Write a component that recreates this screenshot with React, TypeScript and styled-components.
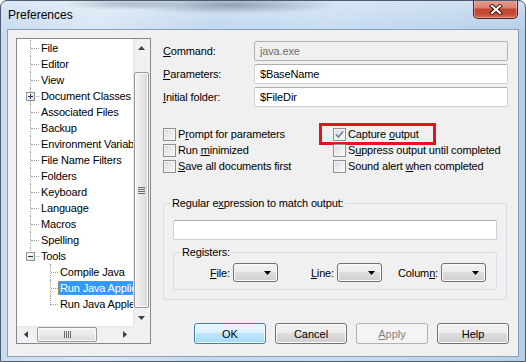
import React from "react";
import styled, { createGlobalStyle, css } from "styled-components";

const GlobalStyle = createGlobalStyle`
  html, body { margin: 0; padding: 0; background: #ffffff; }
  body { font-family: "Liberation Sans", Arial, sans-serif; font-size: 11px; color: #000; }
  * { box-sizing: border-box; }
`;

const FONT = `"Liberation Sans", Arial, sans-serif`;

const Window = styled.div`
  width: 526px;
  height: 362px;
  display: flex;
  flex-direction: column;
  border: 1px solid #4a5b72;
  border-radius: 7px 7px 0 0;
  overflow: hidden;
  background:
    radial-gradient(ellipse 110px 9px at 230px 4px, rgba(70, 82, 100, 0.45), rgba(70, 82, 100, 0)),
    radial-gradient(ellipse 60px 6px at 120px 3px, rgba(70, 82, 100, 0.3), rgba(70, 82, 100, 0)),
    linear-gradient(180deg, rgba(255, 255, 255, 0.3) 0, rgba(255, 255, 255, 0) 28px),
    linear-gradient(90deg, #c9dcf0 0%, #dae7f5 18%, #c2d8ee 40%, #c9ddf2 62%, #b7d0ea 100%);
`;

const TitleBar = styled.div`
  height: 28px;
  display: flex;
  justify-content: space-between;
  flex-shrink: 0;
`;

const Title = styled.div`
  align-self: center;
  padding-left: 7px;
  font-family: ${FONT};
  font-size: 12px;
  color: #000;
`;

const CloseButton = styled.div`
  width: 45px;
  height: 19px;
  margin: -1px 7px 0 0;
  border: 1px solid #5a1f17;
  border-top: none;
  border-radius: 0 0 5px 5px;
  background: linear-gradient(180deg, #e6a596 0%, #d98172 42%, #c54431 52%, #c54b37 78%, #d66e5a 100%);
  box-shadow: inset 0 0 0 1px rgba(255, 255, 255, 0.35);
  display: flex;
  align-items: center;
  justify-content: center;
`;

const Client = styled.div`
  flex: 1;
  margin: 0 6px 4px 6px;
  background: #f0f0f0;
  border: 1px solid #8c9fb8;
  display: flex;
  padding: 8px 0 0 8px;
  letter-spacing: -0.15px;
`;

/* ---------- tree ---------- */

const Tree = styled.div`
  width: 135px;
  height: 306px;
  border: 1px solid #828790;
  background: #fff;
  display: grid;
  grid-template-columns: 116px 17px;
  grid-template-rows: 287px 17px;
  flex-shrink: 0;
`;

const TreeRows = styled.div`
  padding-top: 1px;
  overflow: hidden;
`;

const TreeRow = styled.div<{ level: number; last?: boolean }>`
  position: relative;
  height: 16px;
  display: flex;
  align-items: center;
  white-space: nowrap;
  padding-left: ${({ level }) => (level === 1 ? 22 : 41)}px;

  &::before {
    content: "";
    position: absolute;
    left: ${({ level }) => (level === 1 ? 13 : 33)}px;
    top: 0;
    height: ${({ last }) => (last ? 9 : 16)}px;
    border-left: 1px dotted #a0a0a0;
  }

  &::after {
    content: "";
    position: absolute;
    left: ${({ level }) => (level === 1 ? 14 : 34)}px;
    top: 8px;
    width: ${({ level }) => (level === 1 ? 8 : 7)}px;
    border-top: 1px dotted #a0a0a0;
  }
`;

const TreeLabel = styled.span<{ selected?: boolean }>`
  padding: 0 2px;
  line-height: 14px;
  font-family: ${FONT};
  font-size: 11px;
  color: #000;
  ${({ selected }) =>
    selected &&
    css`
      background: #3399ff;
      color: #fff;
      outline: 1px dotted #c98a3a;
      outline-offset: -1px;
    `}
`;

const Expander = styled.svg`
  position: absolute;
  left: 9px;
  top: 4px;
  z-index: 1;
`;

const VScroll = styled.div`
  display: flex;
  flex-direction: column;
  background: linear-gradient(90deg, #e3e3e3 0, #efefef 2px, #f2f2f2 100%);
`;

const HScroll = styled.div`
  display: flex;
  background: linear-gradient(180deg, #e3e3e3 0, #efefef 2px, #f2f2f2 100%);
`;

const ScrollCorner = styled.div`
  background: #f0f0f0;
`;

const ArrowCell = styled.div`
  width: 17px;
  height: 17px;
  flex-shrink: 0;
  display: flex;
  align-items: center;
  justify-content: center;
`;

const Thumb = styled.div<{ horizontal?: boolean }>`
  border: 1px solid #979797;
  border-radius: 2px;
  box-shadow: inset 0 0 0 1px #fafafa;
  display: flex;
  align-items: center;
  justify-content: center;
  ${({ horizontal }) =>
    horizontal
      ? css`
          width: 60px;
          margin: 1px 0 1px 3px;
          background: linear-gradient(180deg, #f3f3f3 0%, #e8e8e8 50%, #d8d8d8 100%);
        `
      : css`
          height: 236px;
          margin: 16px 1px 0 1px;
          background: linear-gradient(90deg, #f3f3f3 0%, #e8e8e8 50%, #d8d8d8 100%);
        `}
`;

const Spacer = styled.div`
  flex: 1;
`;

/* ---------- right side ---------- */

const Panel = styled.div`
  width: 346px;
  margin-left: 12px;
  display: flex;
  flex-direction: column;
`;

const Form = styled.div`
  margin-top: 3px;
  display: grid;
  grid-template-columns: 91px 254px;
  row-gap: 3px;
  align-items: center;
`;

const Label = styled.label`
  font-family: ${FONT};
  font-size: 11px;
  color: #000;
  white-space: nowrap;
`;

const TextField = styled.input`
  height: 20px;
  width: 100%;
  margin: 0;
  padding: 0 5px;
  font-family: ${FONT};
  font-size: 11px;
  letter-spacing: -0.15px;
  color: #000;
  background: #fff;
  border: 1px solid #cdd0d6;
  border-top-color: #abadb3;
  border-radius: 2px;
  outline: none;

  &:disabled {
    background: #f0f0f0;
    color: #6d6d6d;
    border-color: #adb2b5;
  }
`;

const Checks = styled.div`
  margin-top: 19px;
  display: grid;
  grid-template-columns: 170px 1fr;
  grid-auto-rows: 16px;
`;

const CheckItem = styled.div<{ highlighted?: boolean }>`
  position: relative;
  justify-self: start;
  display: flex;
  align-items: center;
  gap: 2px;
  font-family: ${FONT};
  font-size: 11px;
  white-space: nowrap;

  ${({ highlighted }) =>
    highlighted &&
    css`
      &::after {
        content: "";
        position: absolute;
        left: -14px;
        right: -17px;
        top: -3px;
        bottom: -3px;
        border: 3px solid #e3141d;
      }
    `}
`;

const CheckBox = styled.span`
  width: 13px;
  height: 13px;
  flex-shrink: 0;
  border: 1px solid #8e8f8f;
  background: linear-gradient(135deg, #d3d6da 0%, #eceef0 55%, #fafafa 100%);
  box-shadow: inset 0 0 0 1px #f6f6f6;
  display: flex;
  align-items: center;
  justify-content: center;
`;

const Group = styled.fieldset<{ inner?: boolean }>`
  margin: ${({ inner }) => (inner ? "6px 0 0 0" : "23px 0 0 0")};
  padding: ${({ inner }) => (inner ? "4px 11px 7px 0" : "10px 9px 9px 9px")};
  border: 1px solid #d5dfe5;
  border-radius: 3px;
  min-width: 0;
  width: ${({ inner }) => (inner ? "100%" : "344px")};
`;

const Legend = styled.legend<{ inner?: boolean }>`
  padding: 0 2px;
  margin-left: ${({ inner }) => (inner ? "6px" : "-3px")};
  line-height: 13px;
  font-family: ${FONT};
  font-size: 11px;
`;

const Registers = styled.div`
  display: grid;
  grid-template-columns: repeat(3, 104px);
`;

const RegisterCell = styled.div`
  display: flex;
  align-items: center;
  justify-content: flex-end;
  gap: 3px;
`;

const Combo = styled.div`
  width: 45px;
  height: 19px;
  border: 1px solid #707070;
  border-radius: 3px;
  background: linear-gradient(180deg, #f2f2f2 0%, #ebebeb 49%, #dddddd 50%, #cfcfcf 100%);
  box-shadow: inset 0 0 0 1px #fbfbfb;
  display: flex;
  align-items: center;
  justify-content: flex-end;
  padding-right: 6px;
`;

const Buttons = styled.div`
  margin-top: 23px;
  display: flex;
  justify-content: flex-end;
  gap: 9px;
`;

const Button = styled.button<{ kind?: "default" | "disabled" }>`
  width: 72px;
  height: 21px;
  padding: 0;
  font-family: ${FONT};
  font-size: 11px;
  color: #000;
  border: 1px solid #707070;
  border-radius: 3px;
  background: linear-gradient(180deg, #f2f2f2 0%, #ebebeb 49%, #dddddd 50%, #cfcfcf 100%);
  box-shadow: inset 0 0 0 1px #fcfcfc;

  ${({ kind }) =>
    kind === "default" &&
    css`
      border-color: #3c7fb1;
      background: linear-gradient(180deg, #eaf6fd 0%, #d9f0fc 49%, #bee6fd 50%, #a7d9f5 100%);
      box-shadow: inset 0 0 0 1px #f4fbff;
    `}

  ${({ kind }) =>
    kind === "disabled" &&
    css`
      border-color: #adb2b5;
      background: #f4f4f4;
      color: #838383;
      box-shadow: none;
    `}
`;

/* ---------- small drawings ---------- */

const Arrow = ({ dir }: { dir: "up" | "down" | "left" | "right" }) => {
  const pts = {
    up: "0,4 7,4 3.5,0",
    down: "0,0 7,0 3.5,4",
    left: "4,0 4,7 0,3.5",
    right: "0,0 0,7 4,3.5",
  }[dir];
  const vertical = dir === "up" || dir === "down";
  return (
    <svg width={vertical ? 7 : 4} height={vertical ? 4 : 7}>
      <polygon points={pts} fill="#404040" />
    </svg>
  );
};

const Grip = ({ horizontal }: { horizontal?: boolean }) =>
  horizontal ? (
    <svg width="7" height="7">
      {[0, 2, 4, 6].map((x) => (
        <line key={x} x1={x + 0.5} y1="0" x2={x + 0.5} y2="7" stroke="#6a6a6a" />
      ))}
    </svg>
  ) : (
    <svg width="7" height="7">
      {[0, 2, 4, 6].map((y) => (
        <line key={y} x1="0" y1={y + 0.5} x2="7" y2={y + 0.5} stroke="#6a6a6a" />
      ))}
    </svg>
  );

const ExpanderIcon = ({ open }: { open?: boolean }) => (
  <Expander width="9" height="9">
    <defs>
      <linearGradient id={open ? "expg2" : "expg1"} x1="0" y1="0" x2="1" y2="1">
        <stop offset="0" stopColor="#ffffff" />
        <stop offset="1" stopColor="#dcdcdc" />
      </linearGradient>
    </defs>
    <rect x="0.5" y="0.5" width="8" height="8" fill={`url(#${open ? "expg2" : "expg1"})`} stroke="#919191" />
    <line x1="2" y1="4.5" x2="7" y2="4.5" stroke="#1f3a60" />
    {!open && <line x1="4.5" y1="2" x2="4.5" y2="7" stroke="#1f3a60" />}
  </Expander>
);

const CheckMark = () => (
  <svg width="9" height="9" viewBox="0 0 9 9">
    <path d="M1 4.5 L3.4 7 L8 1.5" fill="none" stroke="#7083a8" strokeWidth="1.7" />
  </svg>
);

const DropArrow = () => (
  <svg width="7" height="4">
    <polygon points="0,0 7,0 3.5,4" fill="#000" />
  </svg>
);

/* ---------- data ---------- */

type Node = { label: string; level: number; expander?: "plus" | "minus"; last?: boolean; selected?: boolean };

const nodes: Node[] = [
  { label: "File", level: 1 },
  { label: "Editor", level: 1 },
  { label: "View", level: 1 },
  { label: "Document Classes", level: 1, expander: "plus" },
  { label: "Associated Files", level: 1 },
  { label: "Backup", level: 1 },
  { label: "Environment Variables", level: 1 },
  { label: "File Name Filters", level: 1 },
  { label: "Folders", level: 1 },
  { label: "Keyboard", level: 1 },
  { label: "Language", level: 1 },
  { label: "Macros", level: 1 },
  { label: "Spelling", level: 1 },
  { label: "Tools", level: 1, expander: "minus", last: true },
  { label: "Compile Java", level: 2 },
  { label: "Run Java Application", level: 2, selected: true },
  { label: "Run Java Applet", level: 2, last: true },
];

const Check = ({ children, checked, highlighted }: { children: React.ReactNode; checked?: boolean; highlighted?: boolean }) => (
  <CheckItem highlighted={highlighted}>
    <CheckBox>{checked && <CheckMark />}</CheckBox>
    <span>{children}</span>
  </CheckItem>
);

export default function App() {
  return (
    <>
      <GlobalStyle />
      <Window>
        <TitleBar>
          <Title>Preferences</Title>
          <CloseButton>
            <svg width="14" height="11">
              <path d="M3 2 L11 9 M11 2 L3 9" stroke="#40170f" strokeWidth="4" strokeLinecap="square" />
              <path d="M3 2 L11 9 M11 2 L3 9" stroke="#ffffff" strokeWidth="2" strokeLinecap="square" />
            </svg>
          </CloseButton>
        </TitleBar>

        <Client>
          <Tree>
            <TreeRows>
              {nodes.map((n) => (
                <TreeRow key={n.label} level={n.level} last={n.last}>
                  {n.expander && <ExpanderIcon open={n.expander === "minus"} />}
                  <TreeLabel selected={n.selected}>{n.label}</TreeLabel>
                </TreeRow>
              ))}
            </TreeRows>
            <VScroll>
              <ArrowCell>
                <Arrow dir="up" />
              </ArrowCell>
              <Thumb>
                <Grip />
              </Thumb>
              <Spacer />
              <ArrowCell>
                <Arrow dir="down" />
              </ArrowCell>
            </VScroll>
            <HScroll>
              <ArrowCell>
                <Arrow dir="left" />
              </ArrowCell>
              <Thumb horizontal>
                <Grip horizontal />
              </Thumb>
              <Spacer />
              <ArrowCell>
                <Arrow dir="right" />
              </ArrowCell>
            </HScroll>
            <ScrollCorner />
          </Tree>

          <Panel>
            <Form>
              <Label>
                <u>C</u>ommand:
              </Label>
              <TextField disabled value="java.exe" readOnly />
              <Label>
                <u>P</u>arameters:
              </Label>
              <TextField value="$BaseName" readOnly />
              <Label>
                <u>I</u>nitial folder:
              </Label>
              <TextField value="$FileDir" readOnly />
            </Form>

            <Checks>
              <Check>
                P<u>r</u>ompt for parameters
              </Check>
              <Check checked highlighted>
                Capture <u>o</u>utput
              </Check>
              <Check>
                Run <u>m</u>inimized
              </Check>
              <Check>
                S<u>u</u>ppress output until completed
              </Check>
              <Check>
                <u>S</u>ave all documents first
              </Check>
              <Check>
                Sound alert <u>w</u>hen completed
              </Check>
            </Checks>

            <Group>
              <Legend>
                Regular e<u>x</u>pression to match output:
              </Legend>
              <TextField value="" readOnly />
              <Group inner>
                <Legend inner>Registers:</Legend>
                <Registers>
                  <RegisterCell>
                    <Label>
                      <u>F</u>ile:
                    </Label>
                    <Combo>
                      <DropArrow />
                    </Combo>
                  </RegisterCell>
                  <RegisterCell>
                    <Label>
                      <u>L</u>ine:
                    </Label>
                    <Combo>
                      <DropArrow />
                    </Combo>
                  </RegisterCell>
                  <RegisterCell>
                    <Label>
                      Colum<u>n</u>:
                    </Label>
                    <Combo>
                      <DropArrow />
                    </Combo>
                  </RegisterCell>
                </Registers>
              </Group>
            </Group>

            <Buttons>
              <Button kind="default">OK</Button>
              <Button>Cancel</Button>
              <Button kind="disabled">
                <u>A</u>pply
              </Button>
              <Button>Help</Button>
            </Buttons>
          </Panel>
        </Client>
      </Window>
    </>
  );
}
